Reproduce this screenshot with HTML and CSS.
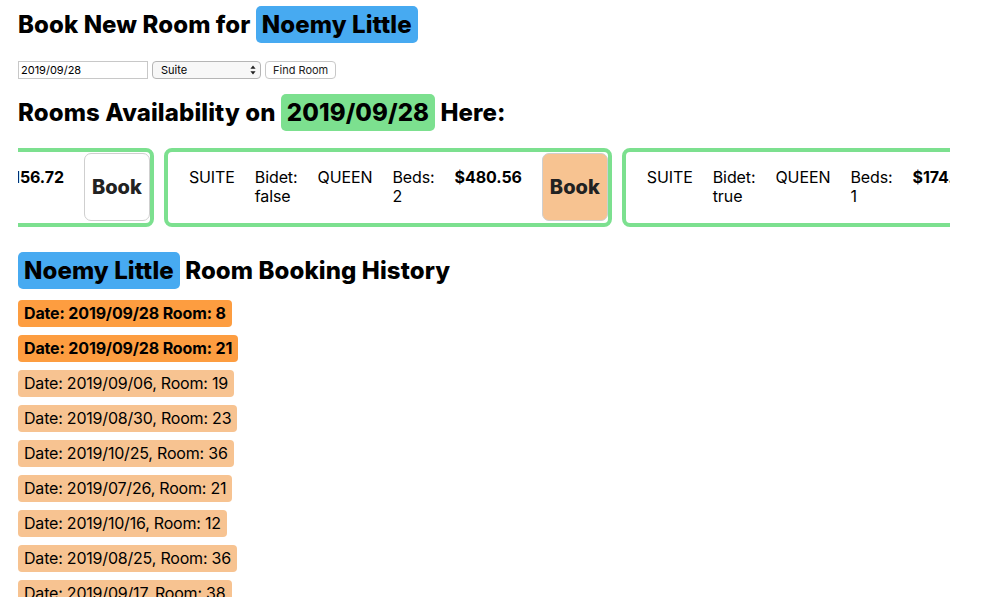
FILE: index.html
```html
<!DOCTYPE html>
<html>
<head>
<meta charset="utf-8">
<link rel="stylesheet" href="styles.css">
</head>
<body>
<h1 class="heading">Book New Room for <span class="hl hl-blue">Noemy Little</span></h1>
<form class="search">
  <input class="date-input" type="text" value="2019/09/28">
  <span class="select-wrap">
    <select class="type-select"><option>Suite</option></select>
    <svg class="select-arrows" width="6" height="10" viewBox="0 0 6 10"><path d="M3 0.5 L5.6 3.8 H0.4 Z M3 9.5 L5.6 6.2 H0.4 Z" fill="#222"/></svg>
  </span>
  <button class="find-btn" type="button">Find Room</button>
</form>
<h2 class="heading heading-avail">Rooms Availability on <span class="hl hl-green">2019/09/28</span> Here:</h2>
<div class="rooms">
  <div class="rooms-track">
    <div class="card">
      <span class="cell">SUITE</span>
      <span class="cell">Bidet: true</span>
      <span class="cell">QUEEN</span>
      <span class="cell">Beds: 1</span>
      <span class="cell price">$156.72</span>
      <button class="book book-plain" type="button">Book</button>
    </div>
    <div class="card">
      <span class="cell">SUITE</span>
      <span class="cell">Bidet: false</span>
      <span class="cell">QUEEN</span>
      <span class="cell">Beds: 2</span>
      <span class="cell price">$480.56</span>
      <button class="book" type="button">Book</button>
    </div>
    <div class="card">
      <span class="cell">SUITE</span>
      <span class="cell">Bidet: true</span>
      <span class="cell">QUEEN</span>
      <span class="cell">Beds: 1</span>
      <span class="cell price">$174.30</span>
      <button class="book" type="button">Book</button>
    </div>
  </div>
</div>
<h2 class="heading heading-history"><span class="hl hl-blue">Noemy Little</span> Room Booking History</h2>
<div class="history">
  <span class="entry entry-new">Date: 2019/09/28 Room: 8</span>
  <span class="entry entry-new">Date: 2019/09/28 Room: 21</span>
  <span class="entry">Date: 2019/09/06, Room: 19</span>
  <span class="entry">Date: 2019/08/30, Room: 23</span>
  <span class="entry">Date: 2019/10/25, Room: 36</span>
  <span class="entry">Date: 2019/07/26, Room: 21</span>
  <span class="entry">Date: 2019/10/16, Room: 12</span>
  <span class="entry">Date: 2019/08/25, Room: 36</span>
  <span class="entry">Date: 2019/09/17, Room: 38</span>
</div>
</body>
</html>
```
FILE: styles.css
```css
html, body {
  margin: 0;
  background: #fff;
}
body {
  padding: 6px 18px 0;
  font-family: "Inter", "Noto Sans", sans-serif;
  color: #000;
  overflow: hidden;
  height: 591px;
}
.heading {
  margin: 0;
  font-size: 24px;
  font-weight: 800;
  line-height: 37px;
  height: 37px;
  letter-spacing: 0.1px;
}
.hl {
  display: inline-block;
  line-height: 29px;
  padding: 4px 6px;
  border-radius: 5px;
}
.hl-blue { background: #47aaf1; }
.hl-green { background: #7ce08f; }

.search {
  margin: 18px 0 0;
  display: flex;
  gap: 4px;
  height: 18px;
}
.date-input {
  box-sizing: border-box;
  width: 130px;
  height: 18px;
  margin: 0;
  padding: 0 2px;
  border: 1px solid #c8c8c8;
  font: 11px "Inter", sans-serif;
  color: #000;
}
.select-wrap {
  position: relative;
  display: block;
  height: 18px;
}
.type-select {
  box-sizing: border-box;
  display: block;
  width: 109px;
  height: 18px;
  margin: 0;
  padding: 0 8px;
  border: 1px solid #b5b5b5;
  border-radius: 4px;
  background: #f7f7f7;
  font: 11px "Inter", sans-serif;
  color: #000;
  -webkit-appearance: none;
  appearance: none;
}
.select-arrows {
  position: absolute;
  right: 5px;
  top: 4px;
  pointer-events: none;
}
.find-btn {
  box-sizing: border-box;
  height: 18px;
  margin: 0;
  padding: 0 7px;
  border: 1px solid #c8c8c8;
  border-radius: 4px;
  background: #fff;
  font: 11px "Inter", sans-serif;
  color: #222;
}
.heading-avail { margin-top: 15px; }

.rooms {
  margin-top: 17px;
  width: 932px;
  overflow: hidden;
}
.rooms-track {
  display: flex;
  gap: 10px;
  margin-left: -306px;
  width: max-content;
}
.card {
  display: flex;
  align-items: flex-start;
  gap: 20px;
  border: 4px solid #7ce08f;
  border-radius: 8px;
  padding: 0 0 0 21px;
  flex: none;
}
.cell {
  width: min-content;
  padding-top: 16px;
  font-size: 16px;
  line-height: 19px;
  letter-spacing: -0.1px;
}
.price {
  font-weight: 700;
  white-space: nowrap;
}
.book {
  box-sizing: border-box;
  width: 66px;
  height: 68px;
  margin: 1px 0 2px;
  border: 1px solid #cfcfcf;
  border-radius: 7px;
  background: #f7c391;
  font: 800 20px "Inter", sans-serif;
  color: #222;
  padding: 0;
}
.book-plain { background: #fff; }

.heading-history { margin-top: 25px; }

.history {
  margin-top: 11px;
  display: flex;
  flex-direction: column;
  align-items: flex-start;
  gap: 8px;
}
.entry {
  display: block;
  padding: 4px 6px;
  line-height: 19px;
  font-size: 16px;
  border-radius: 4px;
  background: #f7c391;
  letter-spacing: -0.2px;
}
.entry-new {
  background: #fd9d40;
  font-weight: 700;
  letter-spacing: -0.15px;
}
```
